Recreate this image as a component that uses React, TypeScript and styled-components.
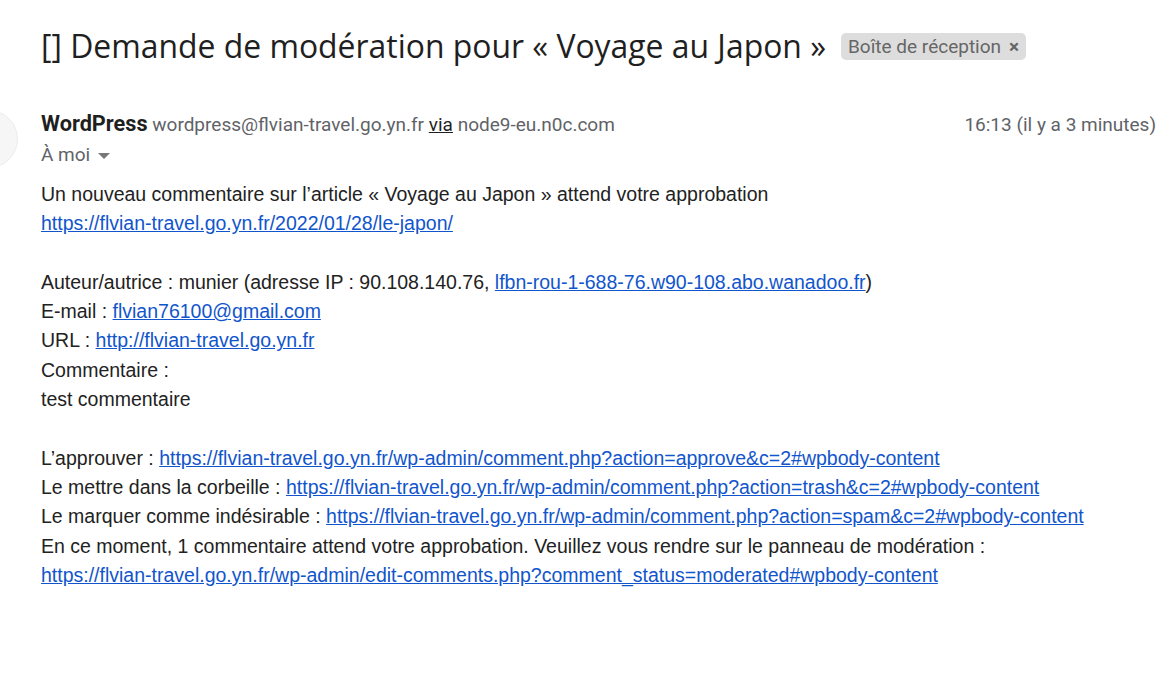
import React from "react";
import styled, { createGlobalStyle } from "styled-components";

const Global = createGlobalStyle`
  html, body { margin: 0; padding: 0; background: #fff; }
  body { width: 1168px; height: 680px; overflow: hidden; }
`;

const Page = styled.div`
  position: relative;
  width: 1168px;
  height: 680px;
  overflow: hidden;
  background: #fff;
`;

const TitleRow = styled.div`
  display: flex;
  align-items: center;
  gap: 15px;
  padding: 27px 0 0 41px;
  height: 38px;
`;

const Title = styled.h2`
  margin: 0;
  font-family: "Open Sans", Roboto, sans-serif;
  font-weight: 400;
  font-size: 31.9px;
  line-height: 38px;
  color: #1f1f1f;
  white-space: nowrap;
`;

const Chip = styled.span`
  display: inline-flex;
  align-items: center;
  gap: 8px;
  height: 27px;
  padding: 0 7px;
  background: #dddddd;
  border-radius: 5px;
  font-family: Roboto, sans-serif;
  font-size: 19px;
  color: #666666;
  white-space: nowrap;
`;

const ChipClose = styled.span`
  font-size: 19px;
  font-weight: 700;
  color: #666;
`;

const Avatar = styled.div`
  position: absolute;
  left: -40px;
  top: 110px;
  width: 56px;
  height: 56px;
  border-radius: 50%;
  background: #f6f6f6;
  border: 1px solid #ececec;
`;

const Header = styled.div`
  display: flex;
  justify-content: space-between;
  align-items: baseline;
  padding: 44px 12px 0 41px;
  font-family: Roboto, sans-serif;
  font-size: 19px;
  line-height: 30px;
`;

const Sender = styled.div`
  white-space: nowrap;
`;

const Name = styled.span`
  font-weight: 700;
  font-size: 21.7px;
  color: #1f1f1f;
`;

const Meta = styled.span`
  color: #5f6368;
`;

const Via = styled.span`
  color: #1f1f1f;
  text-decoration: underline;
`;

const Time = styled.span`
  color: #5f6368;
`;

const ToRow = styled.div`
  display: flex;
  align-items: center;
  gap: 8px;
  padding-left: 41px;
  font-family: Roboto, sans-serif;
  font-size: 19px;
  line-height: 30px;
  color: #5f6368;
`;

const Caret = styled.span`
  width: 0;
  height: 0;
  border-left: 6px solid transparent;
  border-right: 6px solid transparent;
  border-top: 6px solid #777;
  margin-top: 2px;
`;

const Body = styled.div`
  padding: 10px 0 0 41px;
  font-family: "Liberation Sans", Arial, sans-serif;
  font-size: 19.5px;
  line-height: 29.3px;
  color: #222222;
  white-space: nowrap;
`;

const Line = styled.div`
  min-height: 29.3px;
`;

const Link = styled.a`
  color: #1155cc;
  text-decoration: underline;
`;

export default function App() {
  return (
    <Page>
      <Global />
      <Avatar />
      <TitleRow>
        <Title>[] Demande de modération pour « Voyage au Japon »</Title>
        <Chip>
          Boîte de réception <ChipClose>×</ChipClose>
        </Chip>
      </TitleRow>
      <Header>
        <Sender>
          <Name>WordPress</Name> <Meta>wordpress@flvian-travel.go.yn.fr</Meta> <Via>via</Via>{" "}
          <Meta>node9-eu.n0c.com</Meta>
        </Sender>
        <Time>16:13 (il y a 3 minutes)</Time>
      </Header>
      <ToRow>
        À moi <Caret />
      </ToRow>
      <Body>
        <Line>Un nouveau commentaire sur l’article « Voyage au Japon » attend votre approbation</Line>
        <Line>
          <Link href="#">https://flvian-travel.go.yn.fr/2022/01/28/le-japon/</Link>
        </Line>
        <Line />
        <Line>
          Auteur/autrice : munier (adresse IP : 90.108.140.76,{" "}
          <Link href="#">lfbn-rou-1-688-76.w90-108.abo.wanadoo.fr</Link>)
        </Line>
        <Line>
          E-mail : <Link href="#">flvian76100@gmail.com</Link>
        </Line>
        <Line>
          URL : <Link href="#">http://flvian-travel.go.yn.fr</Link>
        </Line>
        <Line>Commentaire :</Line>
        <Line>test commentaire</Line>
        <Line />
        <Line>
          L’approuver :{" "}
          <Link href="#">https://flvian-travel.go.yn.fr/wp-admin/comment.php?action=approve&amp;c=2#wpbody-content</Link>
        </Line>
        <Line>
          Le mettre dans la corbeille :{" "}
          <Link href="#">https://flvian-travel.go.yn.fr/wp-admin/comment.php?action=trash&amp;c=2#wpbody-content</Link>
        </Line>
        <Line>
          Le marquer comme indésirable :{" "}
          <Link href="#">https://flvian-travel.go.yn.fr/wp-admin/comment.php?action=spam&amp;c=2#wpbody-content</Link>
        </Line>
        <Line>En ce moment, 1 commentaire attend votre approbation. Veuillez vous rendre sur le panneau de modération :</Line>
        <Line>
          <Link href="#">https://flvian-travel.go.yn.fr/wp-admin/edit-comments.php?comment_status=moderated#wpbody-content</Link>
        </Line>
      </Body>
    </Page>
  );
}
